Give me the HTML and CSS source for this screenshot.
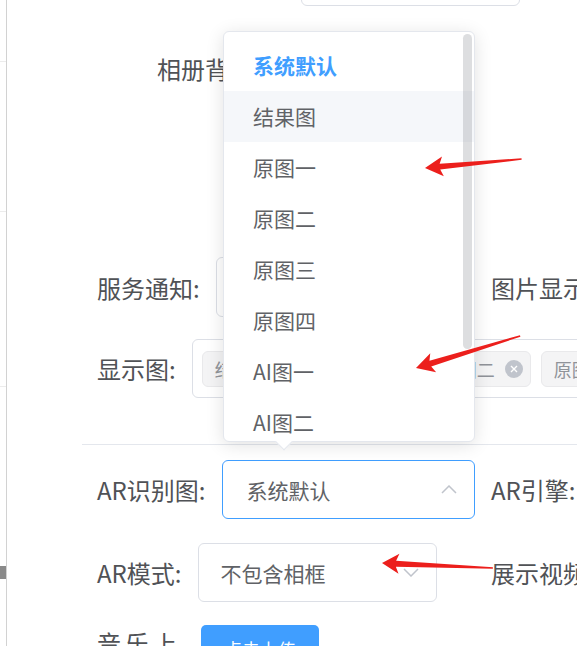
FILE: index.html
```html
<!DOCTYPE html>
<html lang="zh-CN">
<head>
    <meta charset="UTF-8">
    <meta name="viewport" content="width=device-width, initial-scale=1.0">
    <title>相册设置</title>
    <link rel="stylesheet" href="styles.css">
</head>
<body>
    <div class="page">
        <aside class="side">
            <div class="side-cell c1"></div>
            <div class="side-cell c2"></div>
            <div class="side-cell c3"></div>
            <div class="side-thumb"></div>
        </aside>

        <main class="form">
            <div class="field top-field"></div>

            <div class="row album-row">
                <label class="lbl">相册背景：</label>
            </div>

            <div class="row notice-row">
                <div class="cell">
                    <label class="lbl">服务通知:</label>
                    <div class="field grow"></div>
                </div>
                <label class="lbl">图片显示:</label>
            </div>

            <div class="row tags-row">
                <label class="lbl">显示图:</label>
                <div class="field tags">
                    <span class="tag">结果图<svg class="tag-close" viewBox="0 0 18 18"><circle cx="9" cy="9" r="9"/><path d="M6 6l6 6M12 6l-6 6"/></svg></span>
                    <span class="tag">原图一<svg class="tag-close" viewBox="0 0 18 18"><circle cx="9" cy="9" r="9"/><path d="M6 6l6 6M12 6l-6 6"/></svg></span>
                    <span class="tag">原图二<svg class="tag-close" viewBox="0 0 18 18"><circle cx="9" cy="9" r="9"/><path d="M6 6l6 6M12 6l-6 6"/></svg></span>
                    <span class="tag">原图三<svg class="tag-close" viewBox="0 0 18 18"><circle cx="9" cy="9" r="9"/><path d="M6 6l6 6M12 6l-6 6"/></svg></span>
                </div>
            </div>

            <div class="divider"></div>

            <div class="row ar-row first">
                <div class="cell">
                    <label class="lbl">AR识别图:</label>
                    <div class="field select active">
                        <span>系统默认</span>
                        <svg class="chevron" viewBox="0 0 16 9"><polyline points="1,8 8,1 15,8"/></svg>
                    </div>
                </div>
                <label class="lbl">AR引擎:</label>
            </div>

            <div class="row ar-row second">
                <div class="cell">
                    <label class="lbl">AR模式:</label>
                    <div class="field select narrow">
                        <span>不包含相框</span>
                        <svg class="chevron" viewBox="0 0 16 9"><polyline points="1,1 8,8 15,1"/></svg>
                    </div>
                </div>
                <label class="lbl">展示视频:</label>
            </div>

            <div class="row upload-row">
                <label class="lbl wrap">音乐上传:</label>
                <button class="btn" type="button">点击上传</button>
            </div>
        </main>

        <!-- 下拉选项（向上弹出） -->
        <div class="dropdown">
            <ul class="options">
                <li class="option selected">系统默认</li>
                <li class="option hover">结果图</li>
                <li class="option">原图一</li>
                <li class="option">原图二</li>
                <li class="option">原图三</li>
                <li class="option">原图四</li>
                <li class="option">AI图一</li>
                <li class="option">AI图二</li>
                <li class="option">AI图三</li>
            </ul>
            <div class="scrollbar"></div>
        </div>

        <!-- 标注箭头 -->
        <svg class="marks" viewBox="0 0 577 646">
            <polygon transform="translate(425,168) rotate(-5.3)" points="0,0 18,-10 15,-3 97,-0.8 97,0.8 15,3 18,10"/>
            <polygon transform="translate(416,368) rotate(-17.1)" points="0,0 18,-10 15,-3 109,-0.8 109,0.8 15,3 18,10"/>
            <polygon transform="translate(382,563) rotate(2.6)" points="0,0 17,-10 14,-3 111,-0.8 111,0.8 14,3 17,10"/>
        </svg>
    </div>
</body>
</html>
```

FILE: styles.css
```css
body {
    margin: 0;
    font-family: "Noto Sans CJK SC", "Noto Sans", sans-serif;
    background-color: #ffffff;
    overflow: hidden;
}

.page {
    position: relative;
    display: flex;
    width: 577px;
    height: 646px;
    overflow: hidden;
}

/* left table edge */
.side {
    flex: none;
    width: 6px;
    border-right: 1px solid #d2d2d2;
}

.side-cell {
    border-bottom: 1px solid #ececec;
}

.c1 { height: 61px; }
.c2 { height: 149px; }
.c3 { height: 174px; margin-bottom: 179px; }

.side-thumb {
    height: 13px;
    background-color: #8a8a8a;
}

.form {
    flex: 1;
    min-width: 0;
    padding-left: 90px;
}

.row {
    display: flex;
    align-items: center;
    height: 60px;
}

.cell {
    flex: none;
    display: flex;
    align-items: center;
    width: 394px;
}

.lbl {
    flex: none;
    padding-right: 16px;
    font-size: 24px;
    color: #505256;
    white-space: nowrap;
}

.field {
    box-sizing: border-box;
    height: 60px;
    border: 1px solid #dcdfe6;
    border-radius: 6px;
    background-color: #ffffff;
}

.top-field {
    width: 219px;
    margin-top: -54px;
    margin-left: 204px;
}

.album-row {
    margin-top: 32px;
    padding-left: 60px;
}

.notice-row {
    margin-top: 159px;
}

.grow {
    flex: 1;
    margin-right: 20px;
}

.tags-row {
    margin-top: 22px;
    height: 59px;
}

.tags {
    flex: none;
    display: flex;
    align-items: center;
    gap: 10px;
    width: 480px;
    height: 59px;
    padding-left: 9px;
}

.tag {
    flex: none;
    display: flex;
    align-items: center;
    box-sizing: border-box;
    height: 36px;
    padding: 0 7px 0 12px;
    font-size: 18px;
    color: #909399;
    background-color: #f4f4f5;
    border: 1px solid #e9e9eb;
    border-radius: 6px;
}

.tag-close {
    width: 18px;
    height: 18px;
    margin-left: 10px;
}

.tag-close circle {
    fill: #c0c4cc;
}

.tag-close path {
    stroke: #ffffff;
    stroke-width: 1.4;
}

.divider {
    height: 1px;
    margin-top: 46px;
    margin-left: -15px;
    background-color: #e4e7ed;
}

.ar-row {
    height: 59px;
}

.ar-row.first {
    margin-top: 15px;
}

.ar-row.second {
    margin-top: 24px;
}

.select {
    display: flex;
    align-items: center;
    justify-content: space-between;
    width: 253px;
    height: 59px;
    padding: 0 17px 0 24px;
    font-size: 21px;
    color: #606266;
}

.select.active {
    border-color: #409eff;
}

.select.narrow {
    width: 239px;
    padding-left: 22px;
}

.chevron {
    width: 16px;
    height: 9px;
    fill: none;
    stroke: #c0c4cc;
    stroke-width: 1.5;
}

.upload-row {
    align-items: flex-start;
    margin-top: 23px;
}

/* long label wraps inside a fixed label column */
.lbl.wrap {
    width: 88px;
    padding-right: 16px;
    line-height: 36px;
    letter-spacing: 4px;
    white-space: normal;
}

.btn {
    width: 118px;
    height: 48px;
    border: none;
    border-radius: 5px;
    background-color: #409eff;
    color: #ffffff;
    font-family: inherit;
    font-size: 18px;
}

/* popper opened above the AR select */
.dropdown {
    position: absolute;
    left: 223px;
    top: 31px;
    box-sizing: border-box;
    width: 252px;
    height: 411px;
    border: 1px solid #e4e7ed;
    border-radius: 6px;
    background-color: #ffffff;
    box-shadow: 0 3px 18px rgba(0, 0, 0, 0.12);
}

.dropdown::after {
    content: "";
    position: absolute;
    left: 54px;
    bottom: -7px;
    width: 11px;
    height: 11px;
    background-color: #ffffff;
    border-right: 1px solid #e4e7ed;
    border-bottom: 1px solid #e4e7ed;
    transform: rotate(45deg);
}

.options {
    list-style: none;
    margin: 0;
    padding: 8px 0 0;
    height: 100%;
    box-sizing: border-box;
    overflow: hidden;
    border-radius: 6px;
}

.option {
    height: 51px;
    line-height: 51px;
    padding: 0 29px;
    font-size: 21px;
    color: #606266;
}

.option.hover {
    background-color: #f5f7fa;
}

.option.selected {
    color: #409eff;
    font-weight: 700;
}

.scrollbar {
    position: absolute;
    right: 2px;
    top: 2px;
    width: 9px;
    height: 315px;
    border-radius: 5px;
    background-color: rgba(144, 147, 153, 0.3);
}

.marks {
    position: absolute;
    left: 0;
    top: 0;
    width: 577px;
    height: 646px;
    pointer-events: none;
}

.marks polygon {
    fill: #ec1f1c;
}
```
